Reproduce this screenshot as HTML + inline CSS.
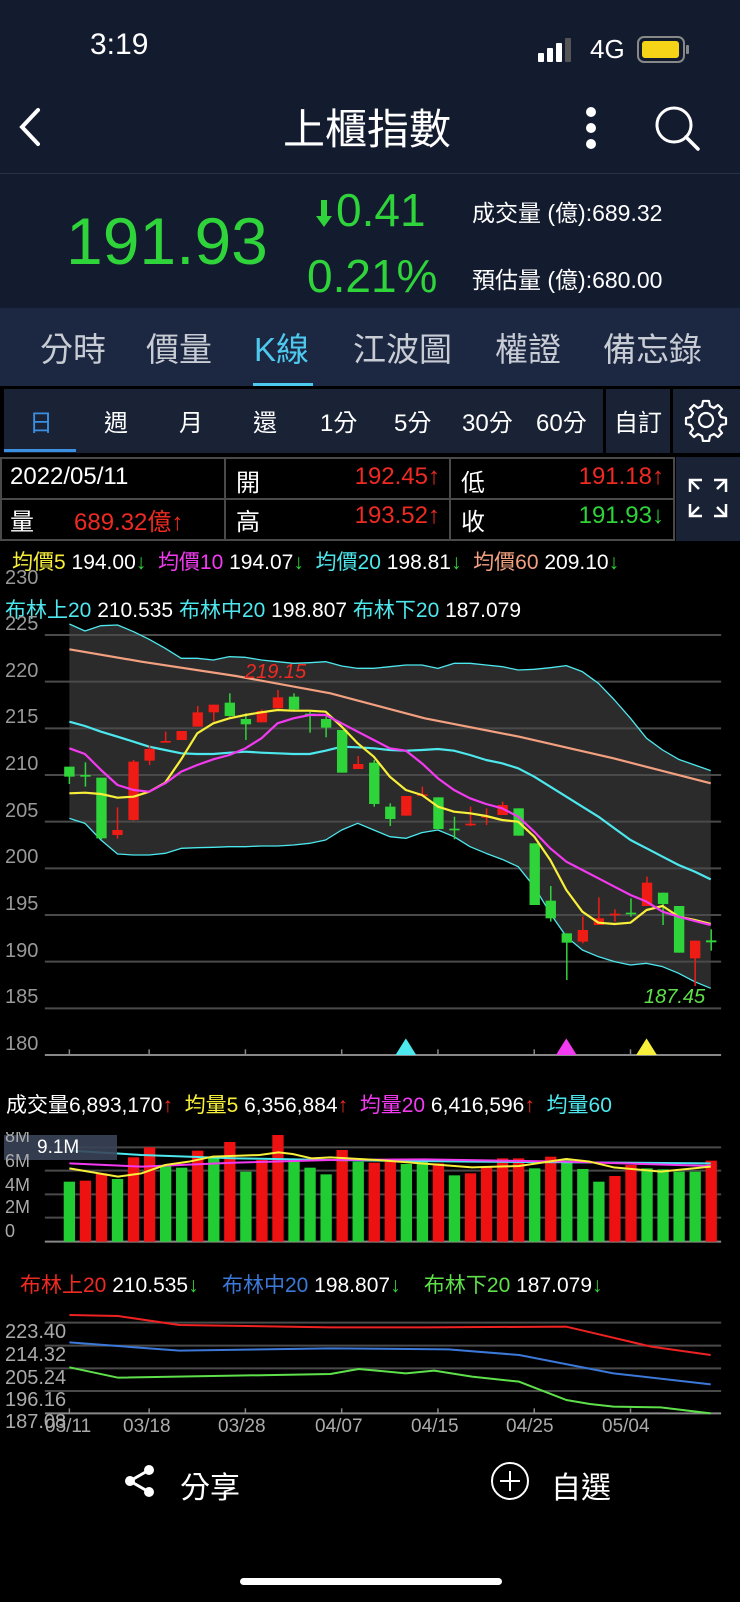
<!DOCTYPE html>
<html><head><meta charset="utf-8">
<style>
*{margin:0;padding:0;box-sizing:border-box}
body{width:740px;height:1602px;background:#000;position:relative;overflow:hidden;font-family:"Liberation Sans","Noto Sans CJK TC",sans-serif;color:#fff}
.a{position:absolute;white-space:nowrap}
.g{color:#2fd33a}.r{color:#ee2a22}
</style></head><body>
<div class="a" style="left:0;top:0;width:740px;height:308px;background:#131b2f"></div>
<div class="a" style="left:0;top:173px;width:740px;height:1px;background:#25324a"></div>
<div class="a" style="left:90px;top:28px;font-size:30px;">3:19</div>
<svg class="a" style="left:538px;top:38px" width="36" height="24"><rect x="0" y="15" width="6" height="9" rx="1" fill="#fff"/><rect x="9" y="10" width="6" height="14" rx="1" fill="#fff"/><rect x="18" y="5" width="6" height="19" rx="1" fill="#fff"/><rect x="27" y="0" width="6" height="24" rx="1" fill="#555"/></svg>
<div class="a" style="left:590px;top:34px;font-size:26px;">4G</div>
<svg class="a" style="left:637px;top:36px" width="54" height="28"><rect x="1" y="1" width="46" height="25" rx="6" fill="none" stroke="#888" stroke-width="2"/><rect x="5" y="5" width="37" height="17" rx="3" fill="#f5d418"/><rect x="49" y="9" width="3" height="9" rx="1" fill="#888"/></svg>
<svg class="a" style="left:14px;top:106px" width="30" height="42"><path d="M24 4 L8 21 L24 38" fill="none" stroke="#fff" stroke-width="4" stroke-linecap="round"/></svg>
<div class="a" style="left:283px;top:96px;font-size:42px;">上櫃指數</div>
<svg class="a" style="left:582px;top:104px" width="20" height="50"><circle cx="9" cy="8" r="5" fill="#fff"/><circle cx="9" cy="24" r="5" fill="#fff"/><circle cx="9" cy="40" r="5" fill="#fff"/></svg>
<svg class="a" style="left:652px;top:104px" width="52" height="50"><circle cx="22" cy="21" r="17" fill="none" stroke="#fff" stroke-width="3"/><path d="M34 33 L46 45" stroke="#fff" stroke-width="3.5" stroke-linecap="round"/></svg>
<div class="a g" style="left:66px;top:203px;font-size:66px;">191.93</div>
<svg class="a" style="left:316px;top:200px" width="16" height="28"><path d="M5 0 H11 V16 H16 L8 27 L0 16 H5 Z" fill="#2fd33a"/></svg>
<div class="a g" style="left:336px;top:183px;font-size:46px;">0.41</div>
<div class="a g" style="left:307px;top:249px;font-size:46px;">0.21%</div>
<div class="a" style="left:472px;top:194px;font-size:23px;">成交量 (億):689.32</div>
<div class="a" style="left:472px;top:261px;font-size:23px;">預估量 (億):680.00</div>
<div class="a" style="left:0;top:308px;width:740px;height:78px;background:#1c2742"></div>
<div class="a" style="left:40px;top:323px;font-size:33px;color:#c8ccd4">分時</div>
<div class="a" style="left:146px;top:323px;font-size:33px;color:#c8ccd4">價量</div>
<div class="a" style="left:254px;top:323px;font-size:33px;color:#4ec9ee">K線</div>
<div class="a" style="left:353px;top:323px;font-size:33px;color:#c8ccd4">江波圖</div>
<div class="a" style="left:495px;top:323px;font-size:33px;color:#c8ccd4">權證</div>
<div class="a" style="left:603px;top:323px;font-size:33px;color:#c8ccd4">備忘錄</div>
<div class="a" style="left:253px;top:383px;width:60px;height:3px;background:#4ec9ee"></div>

<div class="a" style="left:4px;top:389px;width:599px;height:64px;background:#1a2336"></div>
<div class="a" style="left:606px;top:389px;width:64px;height:64px;background:#1a2336"></div>
<div class="a" style="left:673px;top:389px;width:67px;height:64px;background:#1a2336"></div>
<div class="a" style="left:4px;top:449px;width:72px;height:3px;background:#3b8fe0"></div>
<div class="a" style="left:29px;top:403px;font-size:24px;color:#3b8fe0">日</div>
<div class="a" style="left:104px;top:403px;font-size:24px;">週</div>
<div class="a" style="left:179px;top:403px;font-size:24px;">月</div>
<div class="a" style="left:253px;top:403px;font-size:24px;">還</div>
<div class="a" style="left:320px;top:403px;font-size:24px;">1分</div>
<div class="a" style="left:394px;top:403px;font-size:24px;">5分</div>
<div class="a" style="left:462px;top:403px;font-size:24px;">30分</div>
<div class="a" style="left:536px;top:403px;font-size:24px;">60分</div>
<div class="a" style="left:614px;top:403px;font-size:24px;">自訂</div>
<svg class="a" style="left:684px;top:398px" width="44" height="44" viewBox="0 0 44 44"><path d="M19 3h6l1 5 4 2 4-3 4 4-3 4 2 4 5 1v6l-5 1-2 4 3 4-4 4-4-3-4 2-1 5h-6l-1-5-4-2-4 3-4-4 3-4-2-4-5-1v-6l5-1 2-4-3-4 4-4 4 3 4-2z" fill="none" stroke="#fff" stroke-width="2.2" stroke-linejoin="round"/><circle cx="22" cy="22" r="7" fill="none" stroke="#fff" stroke-width="2.2"/></svg>

<div class="a" style="left:0;top:457px;width:675px;height:84px;border:2px solid #4a4a4a;background:#000"></div>
<div class="a" style="left:0;top:498px;width:675px;height:2px;background:#4a4a4a"></div>
<div class="a" style="left:224px;top:457px;width:2px;height:84px;background:#4a4a4a"></div>
<div class="a" style="left:449px;top:457px;width:2px;height:84px;background:#4a4a4a"></div>
<div class="a" style="left:676px;top:457px;width:64px;height:84px;background:#1a2336"></div>
<svg class="a" style="left:686px;top:476px" width="44" height="44"><g stroke="#fff" stroke-width="2.5" fill="none"><path d="M4 16V4h12M4 4l9 9"/><path d="M28 4h12v12M40 4l-9 9"/><path d="M4 28v12h12M4 40l9-9"/><path d="M40 28v12H28M40 40l-9-9"/></g></svg>
<div class="a" style="left:10px;top:463px;font-size:24px;">2022/05/11</div>
<div class="a" style="left:236px;top:463px;font-size:24px;">開</div>
<div class="a r" style="left:336px;top:463px;font-size:24px;width:104px;text-align:right">192.45↑</div>
<div class="a" style="left:461px;top:463px;font-size:24px;">低</div>
<div class="a r" style="left:560px;top:463px;font-size:24px;width:104px;text-align:right">191.18↑</div>
<div class="a" style="left:10px;top:502px;font-size:24px;">量</div>
<div class="a r" style="left:74px;top:502px;font-size:24px;">689.32億↑</div>
<div class="a" style="left:236px;top:502px;font-size:24px;">高</div>
<div class="a r" style="left:336px;top:502px;font-size:24px;width:104px;text-align:right">193.52↑</div>
<div class="a" style="left:461px;top:502px;font-size:24px;">收</div>
<div class="a g" style="left:560px;top:502px;font-size:24px;width:104px;text-align:right">191.93↓</div>

<div class="a" style="left:12px;top:546px;font-size:21px;"><span style="color:#f7ef3a">均價5</span> 194.00<span class="g">↓</span> &nbsp;<span style="color:#f23af0">均價10</span> 194.07<span class="g">↓</span> &nbsp;<span style="color:#4de8ee">均價20</span> 198.81<span class="g">↓</span> &nbsp;<span style="color:#f2a080">均價60</span> 209.10<span class="g">↓</span></div>
<div class="a" style="left:5px;top:567px;font-size:20px;color:#999">230</div>
<div class="a" style="left:5px;top:594px;font-size:21px;"><span style="color:#4de8ee">布林上20</span> 210.535 <span style="color:#4de8ee">布林中20</span> 198.807 <span style="color:#4de8ee">布林下20</span> 187.079</div>

<svg id="pc" class="a" style="left:0;top:600px" width="740" height="460" viewBox="0 0 1568 1380" preserveAspectRatio="none"></svg>
<div id="pl"></div>
<div class="a r" style="left:245px;top:661px;font-size:20px;font-style:italic">219.15</div>
<div class="a" style="left:644px;top:986px;font-size:20px;font-style:italic;color:#5ee04a">187.45</div>

<div class="a" style="left:6px;top:1089px;font-size:21px;">成交量6,893,170<span class="r">↑</span> &nbsp;<span style="color:#f7ef3a">均量5</span> 6,356,884<span class="r">↑</span> &nbsp;<span style="color:#f23af0">均量20</span> 6,416,596<span class="r">↑</span> &nbsp;<span style="color:#4de8ee">均量60</span></div>
<svg id="vc" class="a" style="left:0;top:1080px" width="740" height="360" viewBox="0 0 1568 1080" preserveAspectRatio="none"></svg>
<div class="a" style="left:4px;top:1135px;width:113px;height:25px;background:#3a4458;opacity:.9"></div>
<div class="a" style="left:37px;top:1137px;font-size:19px;">9.1M</div>
<div class="a" style="left:5px;top:1126px;font-size:18px;color:#aaa;clip-path:inset(6px 0 0 0)">8M</div>
<div class="a" style="left:5px;top:1151px;font-size:18px;color:#aaa">6M</div>
<div class="a" style="left:5px;top:1175px;font-size:18px;color:#aaa">4M</div>
<div class="a" style="left:5px;top:1197px;font-size:18px;color:#aaa">2M</div>
<div class="a" style="left:5px;top:1221px;font-size:18px;color:#aaa">0</div>
<div class="a" style="left:20px;top:1269px;font-size:21px;"><span class="r">布林上20</span> 210.535<span class="g">↓</span> &nbsp;&nbsp;&nbsp;<span style="color:#3b78d8">布林中20</span> 198.807<span class="g">↓</span> &nbsp;&nbsp;&nbsp;<span style="color:#5ee04a">布林下20</span> 187.079<span class="g">↓</span></div>
<div class="a" style="left:5px;top:1321px;font-size:20px;color:#aaa">223.40</div>
<div class="a" style="left:5px;top:1344px;font-size:20px;color:#aaa">214.32</div>
<div class="a" style="left:5px;top:1367px;font-size:20px;color:#aaa">205.24</div>
<div class="a" style="left:5px;top:1389px;font-size:20px;color:#aaa">196.16</div>
<div class="a" style="left:5px;top:1411px;font-size:20px;color:#aaa">187.08</div>
<div class="a" style="left:45px;top:1416px;font-size:19px;color:#aaa">03/11</div>
<div class="a" style="left:123px;top:1416px;font-size:19px;color:#aaa">03/18</div>
<div class="a" style="left:218px;top:1416px;font-size:19px;color:#aaa">03/28</div>
<div class="a" style="left:315px;top:1416px;font-size:19px;color:#aaa">04/07</div>
<div class="a" style="left:411px;top:1416px;font-size:19px;color:#aaa">04/15</div>
<div class="a" style="left:506px;top:1416px;font-size:19px;color:#aaa">04/25</div>
<div class="a" style="left:602px;top:1416px;font-size:19px;color:#aaa">05/04</div>

<svg class="a" style="left:123px;top:1464px" width="34" height="34"><g fill="#fff"><circle cx="26" cy="6" r="5"/><circle cx="7" cy="17" r="5"/><circle cx="26" cy="28" r="5"/></g><path d="M26 6L7 17L26 28" stroke="#fff" stroke-width="3" fill="none"/></svg>
<div class="a" style="left:180px;top:1463px;font-size:30px;">分享</div>
<svg class="a" style="left:490px;top:1461px" width="40" height="40"><circle cx="20" cy="20" r="18" fill="none" stroke="#fff" stroke-width="2"/><path d="M20 10v20M10 20h20" stroke="#fff" stroke-width="2"/></svg>
<div class="a" style="left:551px;top:1463px;font-size:30px;">自選</div>
<div class="a" style="left:240px;top:1578px;width:262px;height:7px;border-radius:4px;background:#fff"></div>

<script>
const X=i=>147+34*i;
function pts(a){let s='';for(let i=0;i<a.length;i+=2)s+=a[i]+','+a[i+1]+' ';return s}
let p='';
const up=[147,72,180,93,214,77,249,75,283,95,316,118,350,145,384,175,418,175,452,180,486,170,520,172,554,180,588,185,622,190,656,188,690,185,724,198,758,205,792,205,826,200,860,195,894,195,928,205,962,190,996,190,1030,195,1064,200,1098,210,1132,208,1166,203,1200,197,1234,215,1268,250,1302,300,1336,355,1370,415,1404,450,1438,478,1472,495,1506,512];
const lo=[147,655,180,670,214,720,249,762,283,765,316,765,350,760,384,745,418,743,452,742,486,740,520,740,554,738,588,738,622,735,656,730,690,720,724,690,758,670,792,690,826,710,860,715,894,698,928,690,962,710,996,740,1030,760,1064,778,1098,800,1132,860,1166,940,1200,1010,1234,1050,1268,1070,1302,1085,1336,1095,1370,1090,1404,1100,1438,1120,1472,1145,1506,1165];
let lr=[];for(let i=lo.length-2;i>=0;i-=2)lr.push(lo[i],lo[i+1]);
p+=`<polygon points="${pts(up.concat(lr))}" fill="#2b2b2b"/>`;
for(let y=105;y<=1365;y+=140)p+=`<line x1="95" x2="1528" y1="${y}" y2="${y}" stroke="${y==1365?'#888':'#4a4a4a'}" stroke-width="2" vector-effect="non-scaling-stroke"/>`;
[147,316,520,724,928,1132,1336].forEach(x=>p+=`<line x1="${x}" x2="${x}" y1="1348" y2="1365" stroke="#888" stroke-width="1.5" vector-effect="non-scaling-stroke"/>`);
const L=(a,c,w)=>p+=`<polyline points="${pts(a)}" fill="none" stroke="${c}" stroke-width="${w}" vector-effect="non-scaling-stroke" stroke-linejoin="round"/>`;
L(up,'#4de8ee',1.3);L(lo,'#4de8ee',1.3);
L([147,365,180,378,214,395,249,410,283,425,316,440,350,450,384,460,418,462,452,462,486,458,520,455,554,458,588,460,622,462,656,462,690,452,724,440,758,442,792,445,826,450,860,452,894,450,928,447,962,452,996,465,1030,480,1064,490,1098,505,1132,530,1166,560,1200,590,1234,620,1268,650,1302,685,1336,720,1370,745,1404,770,1438,795,1472,815,1506,838],'#4de8ee',2.2);
L([147,148,300,185,500,228,700,280,900,355,1100,410,1300,475,1506,550],'#f2a080',2.2);
const C=[[500,530,500,552,'g'],[525,529,487,560,'g'],[533,715,533,718,'g'],[690,705,622,716,'r'],[485,660,480,662,'r'],[447,482,437,495,'r'],[423,427,395,428,'r'],[393,420,393,420,'r'],[337,380,318,380,'r'],[314,337,314,365,'r'],[308,348,280,350,'g'],[357,373,340,420,'g'],[333,367,328,367,'r'],[292,325,270,325,'r'],[290,328,280,330,'g'],[341,345,335,398,'g'],[357,383,350,412,'g'],[390,518,390,518,'g'],[492,507,468,507,'r'],[488,612,480,620,'g'],[620,657,610,678,'g'],[588,647,588,647,'r'],[583,587,560,590,'r'],[592,687,592,687,'g'],[686,690,650,718,'g'],[671,675,620,678,'r'],[648,652,625,675,'r'],[615,645,605,645,'r'],[625,707,625,707,'g'],[730,915,730,915,'g'],[902,955,858,965,'g'],[1000,1028,1000,1140,'g'],[990,1025,950,1030,'r'],[955,975,892,975,'r'],[941,945,928,965,'r'],[938,942,895,950,'g'],[848,918,830,918,'r'],[878,912,878,975,'g'],[918,1058,918,1058,'g'],[1022,1075,1022,1158,'r'],[1021,1027,988,1052,'g']];
C.forEach((c,i)=>{const x=X(i),col=c[4]=='g'?'#2fd33a':'#ee1c14';p+=`<line x1="${x}" x2="${x}" y1="${c[2]}" y2="${c[3]}" stroke="${col}" stroke-width="1.5" vector-effect="non-scaling-stroke"/><rect x="${x-11}" y="${c[0]}" width="22" height="${Math.max(c[1]-c[0],5)}" fill="${col}"/>`});
L([147,580,180,578,214,582,249,593,283,590,316,575,350,548,384,478,418,400,452,370,486,355,520,345,554,337,588,330,622,332,656,332,690,335,724,380,758,430,792,470,826,530,860,570,894,585,928,620,962,635,996,640,1030,648,1064,660,1098,665,1132,710,1166,780,1200,870,1234,935,1268,968,1302,972,1336,968,1370,930,1404,918,1438,950,1472,960,1506,972],'#f7ef3a',2.2);
L([147,445,180,462,214,510,249,555,283,570,316,575,350,550,384,515,418,495,452,478,486,465,520,445,554,415,588,370,622,355,656,345,690,345,724,370,758,395,792,420,826,445,860,452,894,490,928,535,962,570,996,595,1030,612,1064,625,1098,650,1132,695,1166,745,1200,785,1234,810,1268,835,1302,860,1336,885,1370,905,1404,935,1438,950,1472,963,1506,975],'#f23af0',2.2);
[[860,'#4de8ee'],[1200,'#f23af0'],[1370,'#f7ef3a']].forEach(t=>p+=`<polygon points="${t[0]-22},1365 ${t[0]+22},1365 ${t[0]},1315" fill="${t[1]}"/>`);
document.getElementById('pc').innerHTML=p;
const lab=[225,220,215,210,205,200,195,190,185,180];let h='';
lab.forEach((v,i)=>{const y=600+(105+140*i)/3;h+=`<div class="a" style="left:5px;top:${y-22}px;font-size:20px;color:#999">${v}</div>`});
document.getElementById('pl').innerHTML=h;
let q='';
[202,272,343,413,485].forEach(y=>q+=`<line x1="95" x2="1528" y1="${y}" y2="${y}" stroke="${y==485?'#888':'#4a4a4a'}" stroke-width="2" vector-effect="non-scaling-stroke"/>`);
const V=[[305,'g'],[302,'r'],[280,'r'],[297,'g'],[232,'r'],[202,'r'],[255,'g'],[263,'g'],[212,'r'],[230,'g'],[186,'r'],[275,'g'],[240,'r'],[165,'r'],[240,'g'],[263,'g'],[283,'g'],[210,'r'],[245,'g'],[248,'r'],[245,'r'],[252,'g'],[240,'g'],[250,'r'],[286,'g'],[280,'r'],[262,'r'],[235,'r'],[235,'r'],[265,'g'],[230,'r'],[240,'g'],[267,'g'],[305,'g'],[288,'r'],[255,'r'],[265,'g'],[268,'g'],[275,'g'],[275,'g'],[242,'r']];
V.forEach((v,i)=>{q+=`<rect x="${X(i)-12}" y="${v[0]}" width="24" height="${485-v[0]}" fill="${v[1]=='g'?'#22cc33':'#ee1111'}"/>`});
const Q=(a,c,w)=>q+=`<polyline points="${pts(a)}" fill="none" stroke="${c}" stroke-width="${w}" vector-effect="non-scaling-stroke" stroke-linejoin="round"/>`;
Q([147,212,300,225,500,235,700,240,1000,245,1506,250],'#4de8ee',2);
Q([147,250,300,260,500,248,700,240,900,238,1200,245,1506,258],'#f23af0',2);
Q([147,265,250,290,300,280,350,255,400,245,450,230,550,225,590,217,620,222,660,235,700,232,800,240,1000,262,1100,258,1200,237,1250,245,1300,262,1400,275,1506,260],'#f7ef3a',2);
[728,797,865,933,1000].forEach(y=>q+=`<line x1="95" x2="1528" y1="${y}" y2="${y}" stroke="${y==1000?'#888':'#4a4a4a'}" stroke-width="2" vector-effect="non-scaling-stroke"/>`);
[147,316,520,724,928,1132,1336].forEach(x=>q+=`<line x1="${x}" x2="${x}" y1="985" y2="1000" stroke="#888" stroke-width="1.5" vector-effect="non-scaling-stroke"/>`);
Q([147,705,250,708,380,735,700,742,900,742,1200,740,1260,760,1380,800,1506,825],'#ee2222',2);
Q([147,787,380,812,700,805,950,808,1100,825,1300,880,1506,913],'#3b78d8',2);
Q([147,862,250,893,700,882,760,867,860,880,920,872,1000,890,1100,905,1200,960,1250,972,1300,980,1400,982,1506,1000],'#5ee04a',2);
document.getElementById('vc').innerHTML=q;
</script>
</body></html>
